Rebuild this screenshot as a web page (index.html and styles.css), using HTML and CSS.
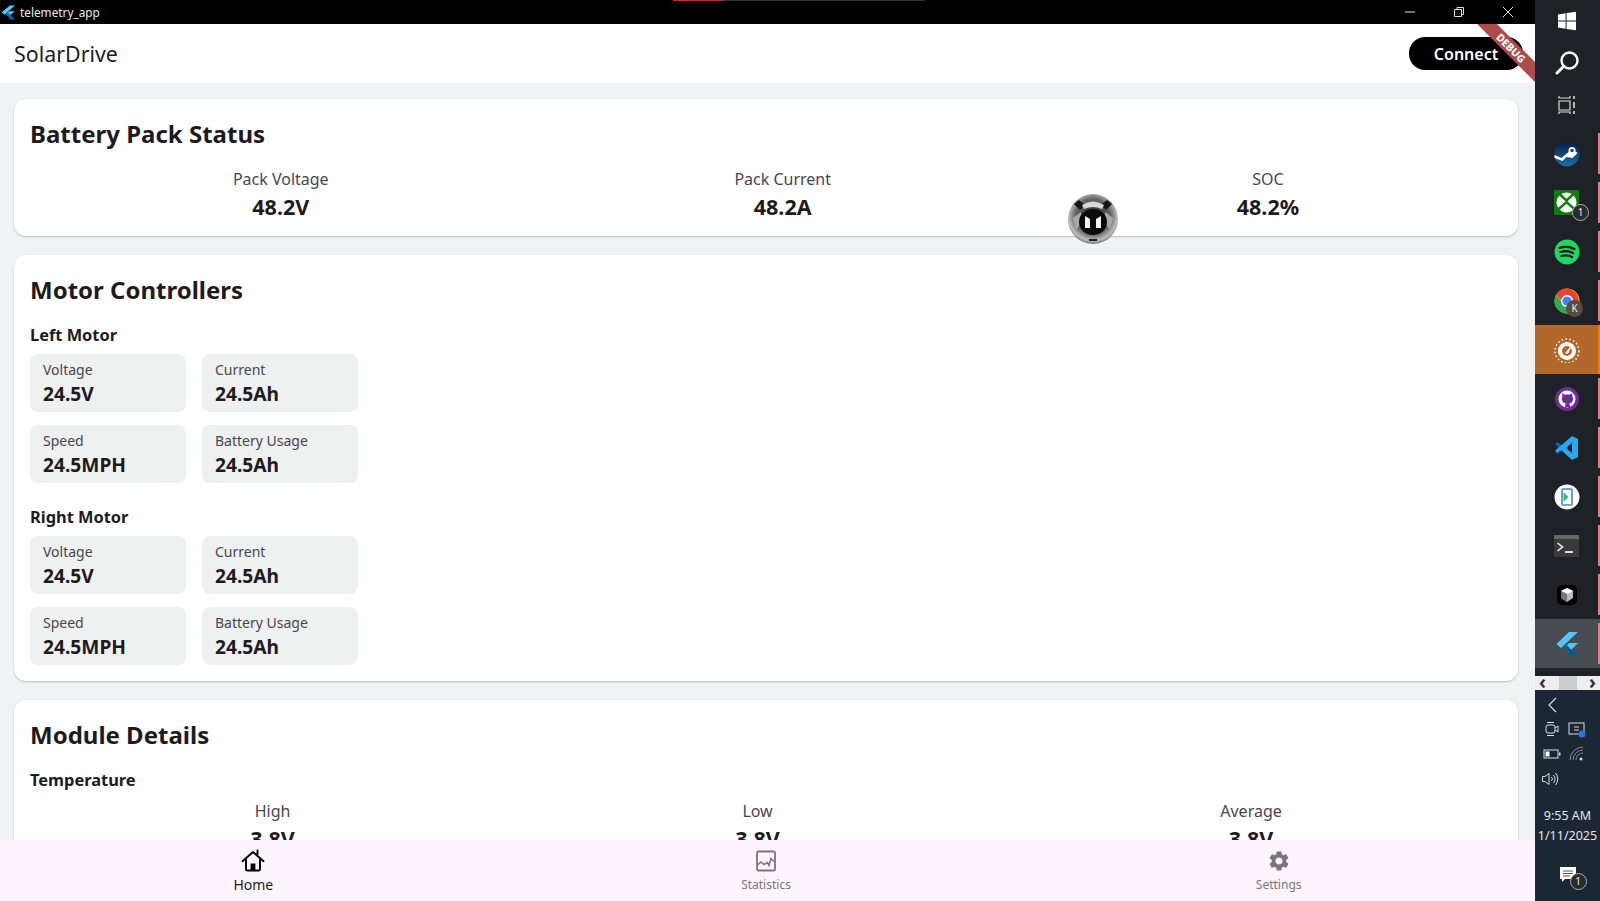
FILE: index.html
```html
<!DOCTYPE html>
<html lang="en">
<head>
<meta charset="utf-8">
<title>telemetry_app</title>
<link rel="stylesheet" href="styles.css">
</head>
<body>
<div class="desktop">
  <div class="window">
    <header class="titlebar">
      <div class="titlebar-left">
        <svg class="flutter-small" viewBox="0 0 24 24"><polygon fill="#54c5f8" points="15,0 24,0 6,16 1,12"/><polygon fill="#54c5f8" points="14,10 24,10 13,19 8,15"/><polygon fill="#0a6aa8" points="13,19 8,15 12,12 24,24 15,24"/></svg>
        <span class="app-name">telemetry_app</span>
      </div>
      <div class="window-controls">
        <svg class="win-btn" viewBox="0 0 14 14"><path d="M2 7h10" stroke="#ddd" fill="none"/></svg>
        <svg class="win-btn" viewBox="0 0 14 14"><path d="M2.500 4.500h7v7h-7zM5 4.500V2.500h6.500v7h-2" stroke="#ddd" fill="none"/></svg>
        <svg class="win-btn" viewBox="0 0 14 14"><path d="M2 2l10 10M12 2L2 12" stroke="#ddd" fill="none"/></svg>
      </div>
    </header>
    <div class="tab-progress"><span class="tab-red"></span><span class="tab-grey"></span></div>

    <div class="appbar">
      <span class="brand">SolarDrive</span>
      <button class="connect">Connect</button>
    </div>
    <div class="debug-banner"><span>DEBUG</span></div>

    <main class="content">
      <section class="card card-pack">
        <h2 class="card-title">Battery Pack Status</h2>
        <div class="stats stats-pack">
          <div class="stat"><span class="stat-label">Pack Voltage</span><span class="stat-value">48.2V</span></div>
          <div class="stat"><span class="stat-label">Pack Current</span><span class="stat-value">48.2A</span></div>
          <div class="stat stat-soc"><span class="stat-label">SOC</span><span class="stat-value">48.2%</span></div>
        </div>
      </section>

      <section class="card card-motors">
        <h2 class="card-title">Motor Controllers</h2>
        <h3 class="sub-title">Left Motor</h3>
        <div class="tiles">
          <div class="tile"><span class="tile-label">Voltage</span><span class="tile-value">24.5V</span></div>
          <div class="tile"><span class="tile-label">Current</span><span class="tile-value">24.5Ah</span></div>
          <div class="tile"><span class="tile-label">Speed</span><span class="tile-value">24.5MPH</span></div>
          <div class="tile"><span class="tile-label">Battery Usage</span><span class="tile-value">24.5Ah</span></div>
        </div>
        <h3 class="sub-title sub-right">Right Motor</h3>
        <div class="tiles">
          <div class="tile"><span class="tile-label">Voltage</span><span class="tile-value">24.5V</span></div>
          <div class="tile"><span class="tile-label">Current</span><span class="tile-value">24.5Ah</span></div>
          <div class="tile"><span class="tile-label">Speed</span><span class="tile-value">24.5MPH</span></div>
          <div class="tile"><span class="tile-label">Battery Usage</span><span class="tile-value">24.5Ah</span></div>
        </div>
      </section>

      <section class="card card-module">
        <h2 class="card-title">Module Details</h2>
        <h3 class="sub-title">Temperature</h3>
        <div class="stats stats-temp">
          <div class="stat"><span class="stat-label">High</span><span class="stat-value">3.8V</span></div>
          <div class="stat"><span class="stat-label">Low</span><span class="stat-value">3.8V</span></div>
          <div class="stat"><span class="stat-label">Average</span><span class="stat-value">3.8V</span></div>
        </div>
      </section>
    </main>

    <nav class="bottom-nav">
      <div class="nav-item nav-active">
        <svg class="nav-icon" viewBox="0 0 24 24"><path d="M1.500 12.200 12 3l10.500 9.200M5 10v10.200a1.300 1.300 0 0 0 1.300 1.300h11.400a1.300 1.300 0 0 0 1.300-1.300V10M16.500 5V1.500" fill="none" stroke="#000" stroke-width="1.900" stroke-linecap="round" stroke-linejoin="round"/><rect x="9.600" y="14.500" width="4.800" height="7" fill="#000"/></svg>
        <span class="nav-label">Home</span>
      </div>
      <div class="nav-item">
        <svg class="nav-icon" viewBox="0 0 24 24"><rect x="3" y="2.500" width="18" height="19" rx="1.500" fill="none" stroke="#79747e" stroke-width="1.800"/><path d="M3.500 16l3.500-3 3 2.500 3.500-2 1.500 3 2-7 3 3" fill="none" stroke="#79747e" stroke-width="1.500"/></svg>
        <span class="nav-label">Statistics</span>
      </div>
      <div class="nav-item">
        <svg class="nav-icon" viewBox="0 0 24 24"><path fill="#79747e" d="M19.140 12.940c.04-.3.06-.61.06-.94 0-.32-.02-.64-.07-.94l2.030-1.580c.18-.14.23-.41.12-.61l-1.920-3.320c-.12-.22-.37-.29-.59-.22l-2.390.96c-.5-.38-1.030-.7-1.620-.94l-.36-2.540c-.04-.24-.24-.41-.48-.41h-3.840c-.24 0-.43.17-.47.41l-.36 2.540c-.59.24-1.130.57-1.620.94l-2.390-.96c-.22-.08-.47 0-.59.22L2.740 8.870c-.12.21-.08.47.12.61l2.030 1.580c-.05.3-.09.63-.09.94s.02.64.07.94l-2.030 1.580c-.18.14-.23.41-.12.61l1.920 3.320c.12.22.37.29.59.22l2.390-.96c.5.38 1.030.7 1.620.94l.36 2.540c.05.24.24.41.48.41h3.840c.24 0 .44-.17.47-.41l.36-2.540c.59-.24 1.130-.56 1.620-.94l2.390.96c.22.08.47 0 .59-.22l1.920-3.320c.12-.22.07-.47-.12-.61l-2.010-1.580zM12 15.600c-1.980 0-3.600-1.620-3.600-3.600s1.620-3.600 3.600-3.600 3.600 1.620 3.600 3.600-1.620 3.600-3.600 3.600z"/></svg>
        <span class="nav-label">Settings</span>
      </div>
    </nav>

    <div class="float-bubble">
      <svg viewBox="0 0 50 50">
        <defs><radialGradient id="metal" cx="50%" cy="45%" r="55%"><stop offset="0" stop-color="#222"/><stop offset=".65" stop-color="#666"/><stop offset=".88" stop-color="#bdbdbd"/><stop offset="1" stop-color="#777"/></radialGradient></defs>
        <circle cx="25" cy="25" r="25" fill="url(#metal)"/>
        <path d="M6 10l5-4 6 5-5 5zM44 10l-5-4-6 5 5 5z" fill="#151515"/>
        <path d="M14 11q11-7 22 0l-2 4q-9-4-18 0z" fill="#d8d8d8"/>
        <path d="M5 24l8-6v12l-5 5zM45 24l-8-6v12l5 5z" fill="#aaa"/>
        <ellipse cx="25" cy="28" rx="14" ry="13" fill="#0b0b0b"/>
        <path d="M17 22l5 3v9h-5zM33 22l-5 3v9h5z" fill="#f2f2f2"/>
        <rect x="21" y="45" width="8" height="2" fill="#222"/>
      </svg>
    </div>
  </div>

  <aside class="taskbar">
    <div class="sys-group">
      <div class="sys-item">
        <svg class="ico-20" viewBox="0 0 20 20"><path fill="#fff" d="M1 3.400 8.600 2.300v7.200H1zM9.600 2.100 19 .8v8.700H9.600zM1 10.500h7.600v7.200L1 16.600zM9.600 10.500H19v8.700l-9.400-1.300z"/></svg>
      </div>
      <div class="sys-item">
        <svg class="ico-26" viewBox="0 0 26 26"><circle cx="15.500" cy="10.500" r="8" fill="none" stroke="#fff" stroke-width="2.400"/><path d="M9.500 16.500 3 23" stroke="#fff" stroke-width="3" stroke-linecap="round"/></svg>
      </div>
      <div class="sys-item">
        <svg class="ico-20" viewBox="0 0 20 20"><path d="M2 1v2h11V1M2 19v-2h11v2M2 6h11v9H2z" fill="none" stroke="#ddd" stroke-width="1.200"/><path d="M17 1v3M17 7v6M17 16v3" stroke="#ddd" stroke-width="1.600"/></svg>
      </div>
    </div>
    <div class="app-item">
      <svg class="ico-26" viewBox="0 0 26 26"><defs><linearGradient id="steam" x1="0" y1="0" x2="0" y2="1"><stop offset="0" stop-color="#0b1a45"/><stop offset="1" stop-color="#1574a8"/></linearGradient></defs><circle cx="13" cy="13" r="12.500" fill="url(#steam)"/><path d="M0.500 14l7 3 7-6 4-3 5 4-5 5-6-1-4 4-8-3z" fill="#fff"/><circle cx="18" cy="9.500" r="3.500" fill="#fff"/><circle cx="18" cy="9.500" r="1.800" fill="#1c4a80"/></svg>
    </div>
    <div class="app-item">
      <svg class="ico-26" viewBox="0 0 26 26"><rect width="25" height="25" fill="#107c10" rx="1"/><circle cx="12.500" cy="12.500" r="10" fill="#fff"/><path d="M5 3.500 12.500 10.500 20 3.500M3.500 20 12.500 12 21.500 20" fill="none" stroke="#107c10" stroke-width="2.400"/></svg>
      <span class="count-badge">1</span>
    </div>
    <div class="app-item">
      <svg class="ico-26" viewBox="0 0 26 26"><circle cx="13" cy="13" r="12.500" fill="#1ed760"/><path d="M5.500 9q8-2.500 15 1M6.500 13q7-2 12.500 1M7.500 17q6-1.500 10.500 1" fill="none" stroke="#111" stroke-width="2.200" stroke-linecap="round"/></svg>
    </div>
    <div class="app-item">
      <svg class="ico-26" viewBox="0 0 26 26"><circle cx="13" cy="13" r="12.500" fill="#fbbc05"/><path d="M13 .500A12.500 12.500 0 0 0 2.200 6.700L8 13h16.500A12.500 12.500 0 0 0 13 .500z" fill="#ea4335"/><path d="M2.200 6.700A12.500 12.500 0 0 0 13 25.500L17 17H10z" fill="#34a853"/><circle cx="13" cy="13" r="6" fill="#fff"/><circle cx="13" cy="13" r="4.600" fill="#4285f4"/></svg>
      <span class="profile-badge">K</span>
    </div>
    <div class="app-item app-orange">
      <svg class="ico-26" viewBox="0 0 26 26"><circle cx="13" cy="14" r="9" fill="#fff"/><circle cx="13" cy="14" r="5" fill="#b2682a"/><path d="M11 16l7-8-4 9z" fill="#fff"/><circle cx="13" cy="14" r="12" fill="none" stroke="#fff" stroke-width="1.400" stroke-dasharray="1.500 2.400"/></svg>
    </div>
    <div class="app-item">
      <svg class="ico-26" viewBox="0 0 26 26"><circle cx="13" cy="13" r="12" fill="#6e2d95"/><circle cx="13" cy="13" r="8.500" fill="#fff"/><path d="M8 7l2 1.500h6L18 7l.5 4 1 2-2 4h-2l.5 4h-5l.5-4h-2l-2-4 1-2z" fill="#6e2d95"/></svg>
    </div>
    <div class="app-item">
      <svg class="ico-26" viewBox="0 0 26 26"><path fill="#0065a9" d="M1 9l2.500-2 6.500 5 4-3v8l-4-3-6.500 5L1 17l4-4z"/><path fill="#2ba6ef" d="M18 1l6 3v18l-6 3-11-10-3.500 2.600L1 15.700 18 1zm0 7-6 5 6 5z"/></svg>
    </div>
    <div class="app-item">
      <svg class="ico-26" viewBox="0 0 26 26"><circle cx="13" cy="13" r="12.500" fill="#fff"/><rect x="8" y="5" width="10" height="16" rx="1" fill="none" stroke="#4a80d8" stroke-width="1.600"/><path d="M9.500 8l5 5-5 5z" fill="#2fbf71"/></svg>
    </div>
    <div class="app-item">
      <svg class="ico-26" viewBox="0 0 26 26"><rect y="2" width="25" height="22" fill="#3a3a3a"/><rect y="2" width="25" height="4" fill="#666"/><path d="M3.500 10l5 4-5 4" fill="none" stroke="#eee" stroke-width="1.600"/><path d="M11 19h8" stroke="#eee" stroke-width="1.800"/></svg>
    </div>
    <div class="app-item">
      <svg class="ico-26" viewBox="0 0 26 26"><rect x="1" y="1" width="20" height="20" rx="5" transform="translate(2 2)" fill="#000"/><path d="M13 6l6 3v7l-6 4-6-4V9z" fill="#bbb"/><path d="M13 12l6-3-6-3-6 3z" fill="#fff"/><path d="M13 12v8l-6-4V9z" fill="#777"/></svg>
    </div>
    <div class="app-item app-current">
      <svg class="ico-26" viewBox="0 0 26 26"><polygon fill="#54c5f8" points="15,1 24,1 7,17 2.500,13"/><polygon fill="#54c5f8" points="15,12 24,12 15,21 10.500,17"/><polygon fill="#01579b" points="15,21 10.500,17 13,14.500 24,25 16,25"/></svg>
    </div>
    <div class="scrollbar"><span class="arrow">‹</span><span class="thumb"></span><span class="arrow">›</span></div>
    <div class="tray">
      <svg class="tray-chevron" viewBox="0 0 12 16"><path d="M9 1 2 8l7 7" fill="none" stroke="#ddd" stroke-width="1.200"/></svg>
      <div class="tray-row">
        <svg class="tray-icon" viewBox="0 0 18 18"><rect x="3" y="5" width="9" height="8" rx="2" fill="none" stroke="#ddd"/><path d="M12 8l3-2v6l-3-2M4 2.500h7M4 15.500h7" fill="none" stroke="#ddd"/></svg>
        <svg class="tray-icon" viewBox="0 0 18 18"><rect x="1" y="3" width="15" height="11" fill="none" stroke="#ddd"/><path d="M6 7h5M6 10h5" stroke="#ddd"/><circle cx="14" cy="14" r="3.500" fill="#2a74d8"/></svg>
      </div>
      <div class="tray-row">
        <svg class="tray-icon" viewBox="0 0 18 18"><rect x="1" y="5" width="14" height="8" fill="none" stroke="#ddd"/><rect x="2.500" y="6.500" width="4" height="5" fill="#fff"/><rect x="16" y="7.500" width="1.500" height="3" fill="#ddd"/></svg>
        <svg class="tray-icon" viewBox="0 0 18 18"><path d="M2 15a13 13 0 0 1 13-13M5 15a10 10 0 0 1 10-10M8 15a7 7 0 0 1 7-7" fill="none" stroke="#888"/><circle cx="13" cy="14" r="1.500" fill="#ddd"/></svg>
      </div>
      <div class="tray-row tray-row-left">
        <svg class="tray-icon" viewBox="0 0 18 18"><path d="M1.500 6.500H4L8 3.500v11L4 11.500H1.500zM10.500 7a3 3 0 0 1 0 4M12.500 5a6 6 0 0 1 0 8M14.500 3a9 9 0 0 1 0 12" fill="none" stroke="#ddd"/></svg>
      </div>
      <div class="clock"><span>9:55 AM</span><span>1/11/2025</span></div>
      <div class="notif">
        <svg class="notif-icon" viewBox="0 0 18 18"><path d="M1 1h16v12H6l-3 3v-3H1z" fill="#fff"/><path d="M4 5h10M4 7.500h10M4 10h7" stroke="#555"/></svg>
        <span class="count-badge notif-badge">1</span>
      </div>
    </div>
  </aside>
</div>
</body>
</html>
```
FILE: styles.css
```css
* { box-sizing: border-box; }
html, body { margin: 0; height: 100%; overflow: hidden; }
body { font-family: "Noto Sans", "Open Sans", sans-serif; color: #1d1b20; }
h2, h3 { margin: 0; }

.desktop { display: flex; width: 1600px; height: 901px; }
.window { position: relative; flex: 0 0 1535px; display: flex; flex-direction: column; height: 901px; overflow: hidden; background: #f1f2f4; }

.titlebar { flex: 0 0 24px; display: flex; align-items: center; justify-content: space-between; background: #000; color: #e8e8e8; }
.titlebar-left { display: flex; align-items: center; gap: 5px; }
.flutter-small { width: 14px; height: 17px; margin-left: 1px; }
.app-name { font-size: 11.800px; }
.window-controls { display: flex; gap: 35px; padding-right: 20px; }
.win-btn { width: 14px; height: 14px; display: block; }
.tab-progress { position: absolute; top: 0; left: 673px; display: flex; height: 1px; }
.tab-red { width: 50px; background: #c62833; }
.tab-grey { width: 202px; background: #333; }

.appbar { flex: 0 0 59px; display: flex; align-items: center; justify-content: space-between; padding: 0 12px 0 14px; background: #fff; }
.brand { font-size: 21.400px; color: #1d1b20; }
.connect { width: 114px; height: 33px; border: 0; border-radius: 16px; background: #000; color: #fff; font: 600 16px "Noto Sans", sans-serif; }
.debug-banner { position: absolute; top: 24px; right: 0; width: 60px; height: 60px; overflow: hidden; }
.debug-banner span { position: absolute; top: 17px; left: -6px; width: 84px; height: 14px; transform: rotate(45deg); background: #ad4a4c; color: #fff; font: 800 10.500px/14px "Noto Sans", sans-serif; text-align: center; }

.content { flex: 1; min-height: 0; overflow: hidden; padding: 16px 17px 0 14px; display: flex; flex-direction: column; gap: 19px; }
.card { flex: none; background: #fff; border-radius: 12px; padding: 16px; box-shadow: 0 1px 2px rgba(0,0,0,.22); }
.card-pack { height: 137px; }
.card-motors { height: 426px; }
.card-module { height: 300px; }
.card-title { font-size: 24px; font-weight: 700; line-height: 37px; color: #1d1b20; }

.stats { display: flex; justify-content: space-around; }
.stats-pack { margin-top: 16px; }
.stats-temp { margin-top: 8px; }
.stat { display: flex; flex-direction: column; align-items: center; }
.stat-soc { min-width: 62px; }
.stat-label { font-size: 16px; line-height: 22px; color: #49454f; }
.stat-value { font-size: 21.500px; font-weight: 700; line-height: 33px; color: #1d1b20; }

.sub-title { font-size: 16.400px; font-weight: 700; line-height: 24px; margin-top: 15px; color: #1d1b20; }
.sub-right { margin-top: 22px; }
.tiles { display: grid; grid-template-columns: 156px 156px; gap: 13px 16px; margin-top: 7px; }
.tile { height: 58px; border-radius: 8px; background: #eff0f0; padding: 6px 13px; display: flex; flex-direction: column; }
.tile-label { font-size: 14px; line-height: 20px; color: #49454f; }
.tile-value { font-size: 19.200px; font-weight: 700; line-height: 27px; color: #1d1b20; }

.bottom-nav { position: relative; flex: 0 0 61px; margin-left: -3px; display: flex; background: #fdf5fd; }
.nav-item { flex: 1; display: flex; flex-direction: column; align-items: center; padding-top: 8px; }
.nav-icon { width: 24px; height: 26px; display: block; }
.nav-label { font-size: 12px; line-height: 18px; margin-top: 2px; color: #79747e; }
.nav-active .nav-label { font-size: 14px; color: #1d1b20; }

.float-bubble { position: absolute; left: 1068px; top: 194px; width: 50px; height: 50px; }
.float-bubble svg { display: block; width: 50px; height: 50px; }

.taskbar { flex: 0 0 65px; display: flex; flex-direction: column; height: 901px; background: #1e2126; }
.sys-group { flex: 0 0 129px; display: flex; flex-direction: column; padding-bottom: 3px; }
.sys-item { flex: 1; display: flex; align-items: center; justify-content: center; padding-right: 1px; }
.app-item { position: relative; flex: 0 0 49px; display: flex; align-items: center; justify-content: center; border-right: 2px solid transparent; }
.app-item::after { content: ""; position: absolute; top: 4px; bottom: 4px; right: -2px; width: 2px; background: #d9808a; }
.app-orange { background: #b2682a; }
.app-orange::after { background: #f07f16; top: 0; bottom: 0; }
.app-current { background: #474c52; }
.ico-20 { width: 20px; height: 20px; display: block; }
.ico-26 { width: 26px; height: 26px; display: block; }
.count-badge { position: absolute; left: 37px; top: 26px; width: 17px; height: 17px; border-radius: 50%; border: 1px solid #aaa; background: #2b2b2b; color: #eee; font-size: 10px; line-height: 15px; text-align: center; }
.profile-badge { position: absolute; left: 31px; top: 24px; width: 17px; height: 17px; border-radius: 50%; background: #5a4a42; color: #eee; font-size: 10px; line-height: 17px; text-align: center; }

.scrollbar { margin-top: 8px; flex: 0 0 14px; display: flex; align-items: center; justify-content: space-between; background: #eeeeee; color: #333; font-size: 19px; font-weight: 700; padding: 0 4px; }
.thumb { width: 18px; height: 14px; background: #cccccc; }
.arrow { line-height: 12px; height: 14px; }

.tray { flex: 1; background: #1b2735; display: flex; flex-direction: column; align-items: center; color: #e6e6e6; padding-top: 7px; }
.tray-chevron { width: 12px; height: 16px; margin-right: 30px; display: block; }
.tray-row { display: flex; justify-content: center; gap: 7px; margin-top: 7px; height: 18px; padding-right: 6px; }
.tray-row-left { width: 100%; justify-content: flex-start; padding-left: 6px; }
.tray-icon { width: 18px; height: 18px; display: block; }
.clock { display: flex; flex-direction: column; align-items: center; margin-top: 18px; font-size: 12.500px; line-height: 20px; white-space: nowrap; }
.notif { position: relative; width: 36px; height: 30px; margin-top: 19px; margin-left: 6px; }
.notif-icon { position: absolute; left: 6px; top: 1px; width: 18px; height: 18px; }
.notif-badge { left: 17px; top: 8px; }
```
